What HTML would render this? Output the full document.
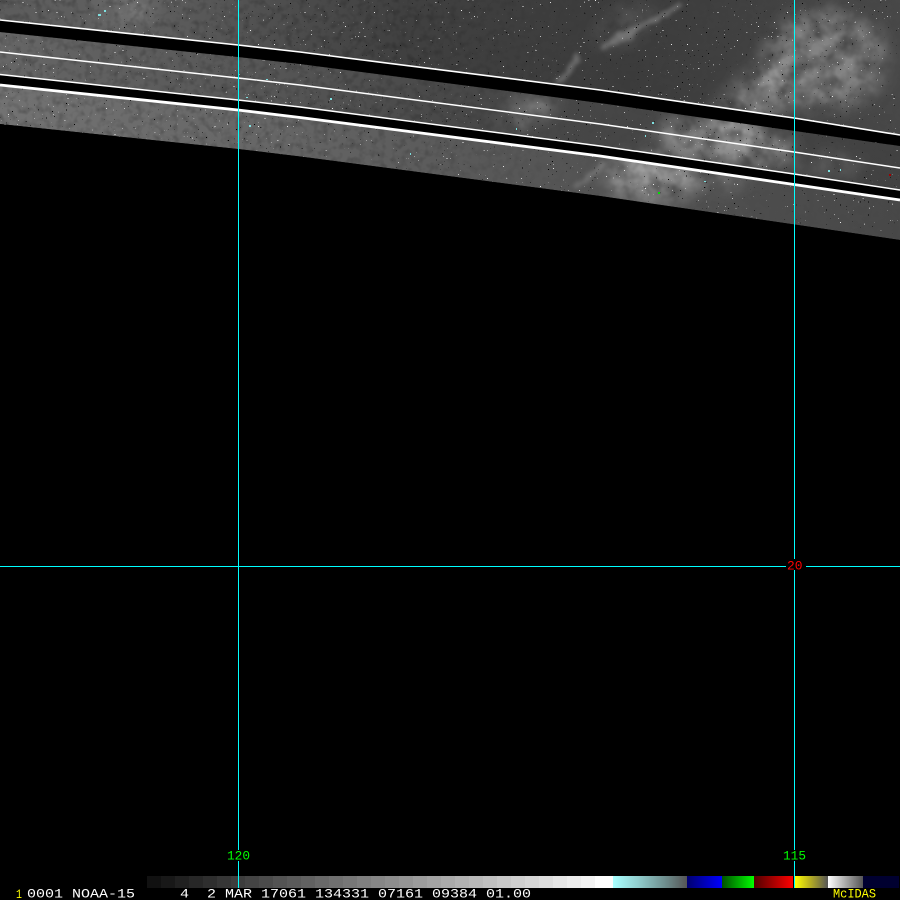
<!DOCTYPE html>
<html><head><meta charset="utf-8"><title>McIDAS NOAA-15</title>
<style>
html,body{margin:0;padding:0;background:#000;width:900px;height:900px;overflow:hidden}
svg{display:block}
text{font-family:"Liberation Mono","DejaVu Sans Mono",monospace;font-size:12.5px;white-space:pre}
</style></head><body>
<svg width="900" height="900" viewBox="0 0 900 900" xmlns="http://www.w3.org/2000/svg">
<defs>
<linearGradient id="ga" x1="0" x2="1" y1="0" y2="0"><stop offset="0" stop-color="#5c5c5c"/><stop offset=".15" stop-color="#606060"/><stop offset=".33" stop-color="#4c4c4c"/><stop offset=".45" stop-color="#404040"/><stop offset=".7" stop-color="#3c3c3c"/><stop offset="1" stop-color="#484848"/></linearGradient>
<linearGradient id="gb" x1="0" x2="1" y1="0" y2="0"><stop offset="0" stop-color="#666"/><stop offset=".3" stop-color="#565656"/><stop offset=".5" stop-color="#484848"/><stop offset=".7" stop-color="#464646"/><stop offset="1" stop-color="#424242"/></linearGradient>
<linearGradient id="gc" x1="0" x2="1" y1="0" y2="0"><stop offset="0" stop-color="#727272"/><stop offset=".3" stop-color="#666"/><stop offset=".5" stop-color="#5a5a5a"/><stop offset=".7" stop-color="#525252"/><stop offset="1" stop-color="#484848"/></linearGradient>
<linearGradient id="c1"><stop offset="0" stop-color="#a8ffff"/><stop offset=".35" stop-color="#90cccc"/><stop offset=".7" stop-color="#6f8f8f"/><stop offset="1" stop-color="#555"/></linearGradient>
<linearGradient id="c2"><stop offset="0" stop-color="#000070"/><stop offset="1" stop-color="#0000ff"/></linearGradient>
<linearGradient id="c3"><stop offset="0" stop-color="#005000"/><stop offset="1" stop-color="#00ff00"/></linearGradient>
<linearGradient id="c4"><stop offset="0" stop-color="#500000"/><stop offset="1" stop-color="#ff0000"/></linearGradient>
<linearGradient id="c5"><stop offset="0" stop-color="#ffff00"/><stop offset=".45" stop-color="#b8b020"/><stop offset="1" stop-color="#555"/></linearGradient>
<linearGradient id="c6"><stop offset="0" stop-color="#fff"/><stop offset=".5" stop-color="#aaa"/><stop offset="1" stop-color="#555"/></linearGradient>
<linearGradient id="mf" x1="0" x2="1" y1="0" y2="0"><stop offset="0" stop-color="#fff"/><stop offset=".45" stop-color="#ddd"/><stop offset=".62" stop-color="#222"/><stop offset="1" stop-color="#111"/></linearGradient>
<mask id="mleft"><rect width="900" height="240" fill="url(#mf)"/></mask>
<clipPath id="sw"><polygon points="0,0 900,0 900,240 600,196 300,156.500 238,149 0,124"/></clipPath>
<filter id="cloud" x="0" y="0" width="900" height="240" filterUnits="userSpaceOnUse" color-interpolation-filters="sRGB"><feGaussianBlur in="SourceGraphic" stdDeviation="9" result="b"/><feTurbulence type="fractalNoise" baseFrequency=".05" numOctaves="3" seed="7"/><feColorMatrix values="0 0 0 0 1  0 0 0 0 1  0 0 0 0 1  1.700 0 0 0 -.2"/><feComposite in="b" operator="in"/></filter>
<filter id="wisp" x="-20%" y="-40%" width="140%" height="180%"><feTurbulence type="fractalNoise" baseFrequency=".05" numOctaves="3" seed="4" result="n"/><feDisplacementMap in="SourceGraphic" in2="n" scale="14" xChannelSelector="R" yChannelSelector="G"/><feGaussianBlur stdDeviation="2.200"/></filter>
<filter id="mott" x="0" y="0" width="100%" height="100%" color-interpolation-filters="sRGB"><feTurbulence type="fractalNoise" baseFrequency=".14" numOctaves="2" seed="5"/><feColorMatrix values="0 0 0 0 0  0 0 0 0 0  0 0 0 0 0  2.500 0 0 0 -1.100"/></filter>
<filter id="spkb" x="0" y="0" width="100%" height="100%" color-interpolation-filters="sRGB"><feTurbulence type="fractalNoise" baseFrequency=".5 .62" numOctaves="1" seed="3"/><feColorMatrix values="0 0 0 0 0  0 0 0 0 0  0 0 0 0 0  120 0 0 0 -90"/></filter>
<filter id="spkw" x="0" y="0" width="100%" height="100%" color-interpolation-filters="sRGB"><feTurbulence type="fractalNoise" baseFrequency=".62 .5" numOctaves="1" seed="19"/><feColorMatrix values="0 0 0 0 .92  0 0 0 0 .92  0 0 0 0 .92  120 0 0 0 -89.500"/></filter>
</defs>
<rect width="900" height="900" fill="#000"/>

<g clip-path="url(#sw)">
<polygon fill="url(#ga)" points="0,0 900,0 900,146 600,103 300,64 238,57 0,32"/>
<polygon fill="url(#gb)" points="0,32 238,57 300,64 600,103 900,146 900,200 600,156 300,117.500 238,110 0,85"/>
<polygon fill="url(#gc)" points="0,85 238,110 300,117.500 600,156 900,200 900,240 600,196 300,156.500 238,149 0,124"/>

<g fill="#fff">
<g filter="url(#cloud)" opacity=".62">
<ellipse cx="125" cy="8" rx="30" ry="22" opacity=".22"/>
<ellipse cx="825" cy="60" rx="62" ry="50" opacity=".55"/>
<ellipse cx="755" cy="100" rx="50" ry="24" transform="rotate(-40 755 100)" opacity=".6"/>
<ellipse cx="725" cy="142" rx="70" ry="20" transform="rotate(8 725 142)" opacity=".7"/>
<ellipse cx="650" cy="178" rx="46" ry="24" opacity=".75"/>
<ellipse cx="715" cy="178" rx="34" ry="12" opacity=".3"/>
<ellipse cx="625" cy="25" rx="35" ry="18" transform="rotate(-30 625 25)" opacity=".2"/>
<ellipse cx="535" cy="105" rx="22" ry="10" opacity=".6"/>
<ellipse cx="515" cy="124" rx="14" ry="10" opacity=".45"/>
<ellipse cx="830" cy="165" rx="36" ry="10" opacity=".25"/>
</g>
<g filter="url(#wisp)" opacity=".24">
<path d="M601 46 L625 32 L650 20 L678 3 L683 7 L652 25 L628 38 L604 50Z"/>
<path d="M552 83 L566 68 L576 56 L581 60 L572 72 L560 85Z"/>
<path d="M575 188 L590 172 L602 160 L606 163 L594 177 L581 190Z" opacity=".7"/>
</g>
</g>

<g mask="url(#mleft)"><rect width="900" height="240" filter="url(#mott)" opacity=".2"/></g>
<rect width="900" height="240" filter="url(#spkb)"/>
<rect width="900" height="240" filter="url(#spkw)"/>

<g fill="#7fe0e0" shape-rendering="crispEdges">
<rect x="98" y="14" width="3" height="2"/><rect x="104" y="10" width="2" height="2"/><rect x="249" y="125" width="2" height="2"/><rect x="246" y="97" width="2" height="1"/><rect x="266" y="79" width="2" height="1"/><rect x="330" y="98" width="2" height="2"/><rect x="410" y="153" width="1" height="2"/><rect x="516" y="128" width="1" height="2"/><rect x="652" y="122" width="2" height="2"/><rect x="645" y="135" width="1" height="2"/><rect x="704" y="181" width="2" height="1"/><rect x="828" y="170" width="2" height="2"/><rect x="840" y="169" width="1" height="2"/>
</g>
<rect x="658" y="192" width="2" height="2" fill="#00e000"/>
<rect x="889" y="174" width="2" height="2" fill="#a00000"/>
</g>

<g fill="#000">
<polygon points="0,20 238,45 300,52 600,90 794,118 900,135 900,146 600,103 300,64 238,57 0,32"/>
<polygon points="0,75 238,100 300,107 600,146 794,174 900,190 900,200 600,156 300,117.500 238,110 0,85"/>
</g>
<g fill="none" stroke="#fff">
<polyline stroke-width="1.600" points="0,20 238,45 300,52 600,90 794,118 900,135"/>
<polyline stroke-width="1.500" points="0,52 238,78 300,85 600,124 794,152 900,168"/>
<polyline stroke-width="1.500" points="0,74.500 238,100 300,107 600,146 794,174 900,190"/>
<polyline stroke-width="2.800" points="0,85 238,110 300,117.500 600,156 794,184.500 900,200"/>
</g>

<g shape-rendering="crispEdges">
<rect x="147" y="876" width="14" height="12" fill="#111"/><rect x="161" y="876" width="14" height="12" fill="#181818"/><rect x="175" y="876" width="14" height="12" fill="#202020"/><rect x="189" y="876" width="14" height="12" fill="#272727"/><rect x="203" y="876" width="14" height="12" fill="#2e2e2e"/><rect x="217" y="876" width="14" height="12" fill="#363636"/><rect x="231" y="876" width="14" height="12" fill="#3d3d3d"/><rect x="245" y="876" width="14" height="12" fill="#444"/><rect x="259" y="876" width="14" height="12" fill="#4b4b4b"/><rect x="273" y="876" width="14" height="12" fill="#535353"/><rect x="287" y="876" width="14" height="12" fill="#5a5a5a"/><rect x="301" y="876" width="14" height="12" fill="#616161"/><rect x="315" y="876" width="14" height="12" fill="#696969"/><rect x="329" y="876" width="14" height="12" fill="#707070"/><rect x="343" y="876" width="14" height="12" fill="#777"/><rect x="357" y="876" width="14" height="12" fill="#7f7f7f"/><rect x="371" y="876" width="14" height="12" fill="#868686"/><rect x="385" y="876" width="14" height="12" fill="#8d8d8d"/><rect x="399" y="876" width="14" height="12" fill="#949494"/><rect x="413" y="876" width="14" height="12" fill="#9c9c9c"/><rect x="427" y="876" width="14" height="12" fill="#a3a3a3"/><rect x="441" y="876" width="14" height="12" fill="#aaa"/><rect x="455" y="876" width="14" height="12" fill="#b2b2b2"/><rect x="469" y="876" width="14" height="12" fill="#b9b9b9"/><rect x="483" y="876" width="14" height="12" fill="#c0c0c0"/><rect x="497" y="876" width="14" height="12" fill="#c8c8c8"/><rect x="511" y="876" width="14" height="12" fill="#cfcfcf"/><rect x="525" y="876" width="14" height="12" fill="#d6d6d6"/><rect x="539" y="876" width="14" height="12" fill="#ddd"/><rect x="553" y="876" width="14" height="12" fill="#e5e5e5"/><rect x="567" y="876" width="14" height="12" fill="#ececec"/><rect x="581" y="876" width="14" height="12" fill="#f3f3f3"/><rect x="595" y="876" width="18" height="12" fill="#fdfdfd"/>
<rect x="613" y="876" width="74" height="12" fill="url(#c1)"/>
<rect x="687" y="876" width="35" height="12" fill="url(#c2)"/>
<rect x="722" y="876" width="32" height="12" fill="url(#c3)"/>
<rect x="754" y="876" width="39" height="12" fill="url(#c4)"/>
<rect x="795" y="876" width="33" height="12" fill="url(#c5)"/>
<rect x="828" y="876" width="35" height="12" fill="url(#c6)"/>
<rect x="863" y="876" width="36" height="12" fill="#000030"/>

<rect x="238" y="0" width="1" height="888" fill="#00ffff"/>
<rect x="794" y="0" width="1" height="888" fill="#00ffff"/>
<rect x="0" y="566" width="900" height="1" fill="#00ffff"/>
<rect x="786" y="559" width="20" height="11" fill="#000"/>
<rect x="226" y="850" width="25" height="11" fill="#000"/>
<rect x="782" y="850" width="25" height="11" fill="#000"/>
</g>

<text x="787" y="569.500" fill="#ff0000" textLength="15.500" lengthAdjust="spacingAndGlyphs">20</text>
<text x="227" y="859.500" fill="#00ff00" textLength="23" lengthAdjust="spacingAndGlyphs">120</text>
<text x="783" y="859.500" fill="#00ff00" textLength="23" lengthAdjust="spacingAndGlyphs">115</text>
<text x="16" y="898" fill="#ffff00" textLength="6" lengthAdjust="spacingAndGlyphs">1</text>
<text x="27" y="897.500" fill="#fff" xml:space="preserve" textLength="504" lengthAdjust="spacingAndGlyphs">0001 NOAA-15     4  2 MAR 17061 134331 07161 09384 01.00</text>
<text x="833" y="897.500" fill="#ffff00" textLength="43" lengthAdjust="spacingAndGlyphs">McIDAS</text>
</svg>
</body></html>
